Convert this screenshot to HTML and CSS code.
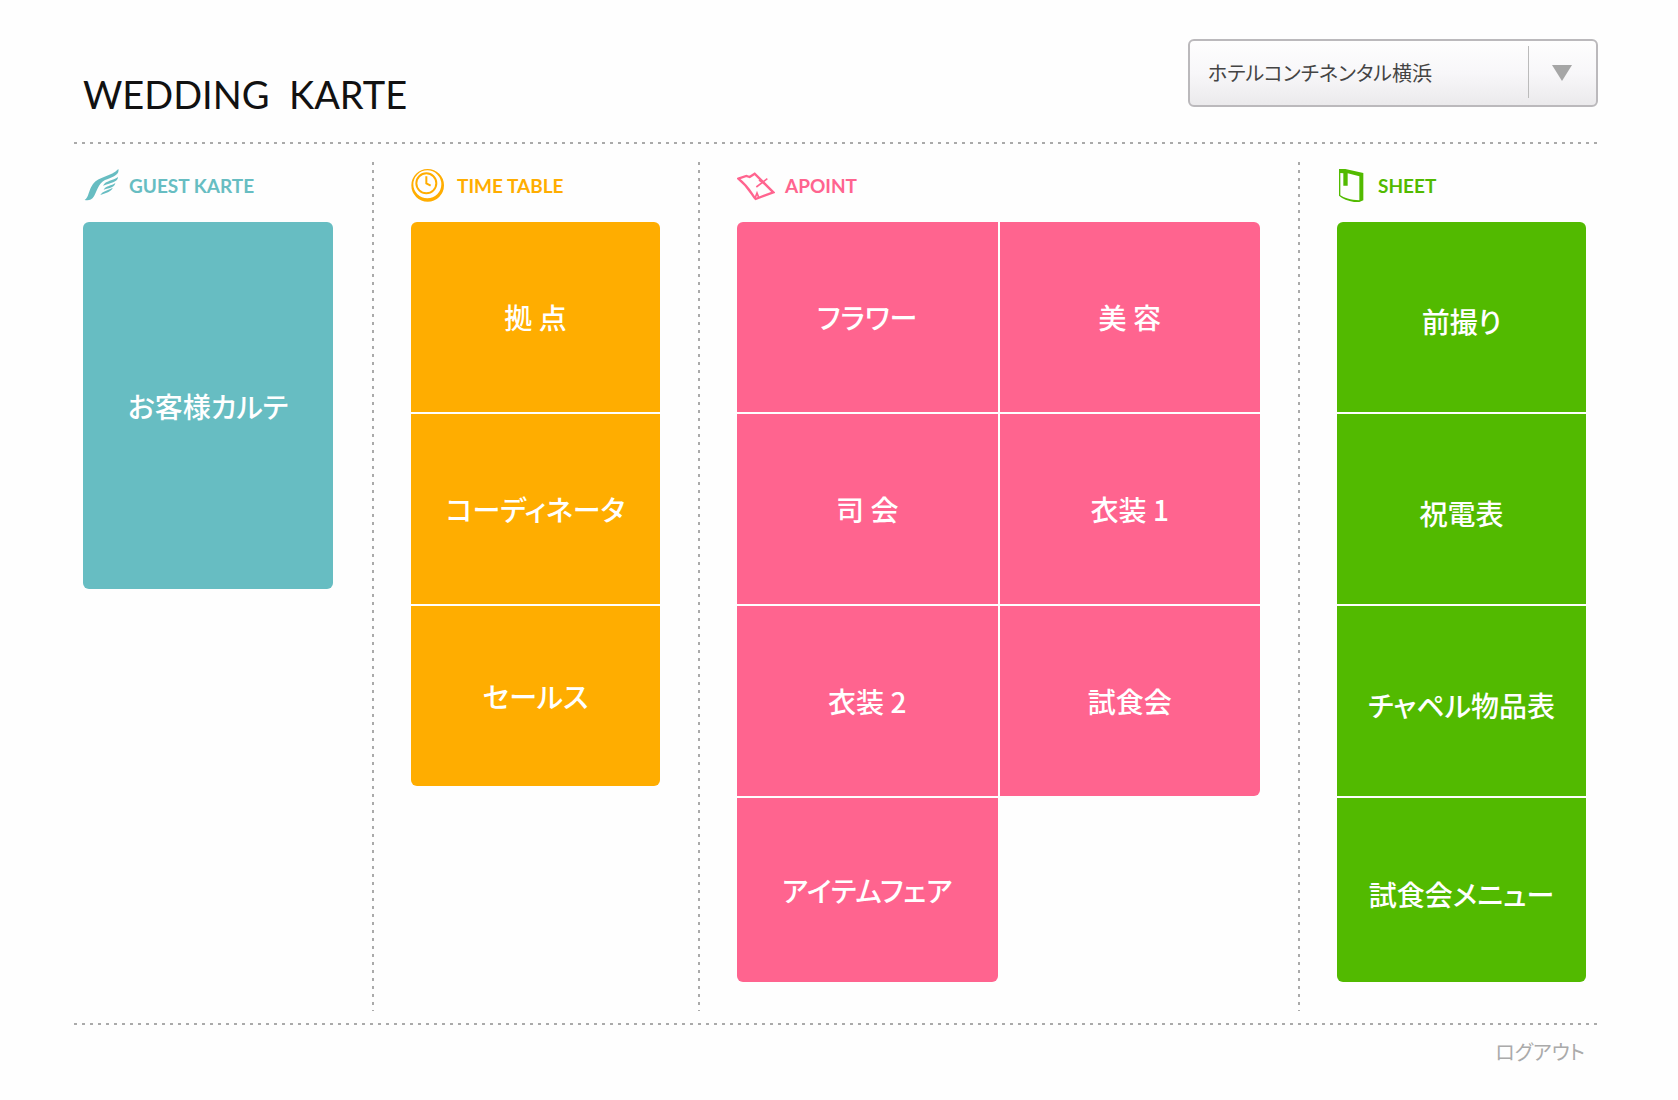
FILE: index.html
```html
<!DOCTYPE html>
<html lang="ja">

<head>
    <meta charset="UTF-8">
    <title>WEDDING KARTE</title>
    <link rel="stylesheet" href="styles.css">
</head>

<body>
    <div class="container">
        <header class="header">
            <h1>WEDDING&nbsp; KARTE</h1>
            <div class="hotel-select">
                <select id="hotel" aria-label="ホテル">
                    <option>ホテルコンチネンタル横浜</option>
                </select>
            </div>
        </header>

        <main class="menu">
            <!-- GUEST KARTE -->
            <section class="menu-col guest">
                <h2>
                    <svg width="36" height="35" viewBox="42 51 108 105" fill="currentColor">
                        <path d="M47 147C60 139 58 118 72 99C88 76 128 77 148 54C153 71 128 79 108 87C88 97 84 120 75 136C67 149 56 149 47 147Z" />
                        <path d="M102 104C110 88 132 90 147 78C147 91 130 95 120 98C112 100 108 102 102 104Z" />
                        <path d="M104 116C111 104 127 105 139 96C138 108 122 111 104 116Z" />
                        <path d="M94 132C101 119 117 119 131 110C129 121 112 125 94 132Z" />
                    </svg>
                    GUEST KARTE
                </h2>
                <div class="tiles">
                    <a href="#">お客様カルテ</a>
                </div>
            </section>

            <!-- TIME TABLE -->
            <section class="menu-col time">
                <h2>
                    <svg width="36" height="35" viewBox="33 51 108 105">
                        <path fill="currentColor" fill-rule="evenodd" d="M34 103a49 49 0 1 0 98 0a49 49 0 1 0-98 0ZM40 100a42 42 0 1 0 84 0a42 42 0 1 0-84 0Z" />
                        <circle cx="79" cy="97" r="30" fill="none" stroke="currentColor" stroke-width="6" />
                        <path d="M79 76V97L92 104" fill="none" stroke="currentColor" stroke-width="6" />
                    </svg>
                    TIME TABLE
                </h2>
                <div class="tiles">
                    <a href="#">拠 点</a>
                    <a href="#">コーディネータ</a>
                    <a href="#">セールス</a>
                </div>
            </section>

            <!-- APOINT -->
            <section class="menu-col apoint">
                <h2>
                    <svg width="38" height="35" viewBox="48 51 114 105" fill="none" stroke="currentColor" stroke-width="7">
                        <path d="M52 83L76 75L86 78L101 68L157 124L104 144C92 132 88 112 52 83Z" />
                        <path d="M102 142L108 126L113 139" stroke-width="5" />
                        <path d="M139 83L106 108M114 87L134 101" stroke-width="5" />
                    </svg>
                    APOINT
                </h2>
                <div class="tiles">
                    <a href="#">フラワー</a>
                    <a href="#">美 容</a>
                    <a href="#">司 会</a>
                    <a href="#">衣装 1</a>
                    <a href="#">衣装 2</a>
                    <a href="#">試食会</a>
                    <a href="#">アイテムフェア</a>
                </div>
            </section>

            <!-- SHEET -->
            <section class="menu-col sheet">
                <h2>
                    <svg width="31" height="35" viewBox="141 51 93 105" fill="currentColor">
                        <path fill-rule="evenodd" d="M147 54H166L220 66V148L208 153H192C174 149 158 144 147 134ZM151 66V133C160 140 182 147 208 148V76L173 67V104H160V67Z" />
                    </svg>
                    SHEET
                </h2>
                <div class="tiles">
                    <a href="#">前撮り</a>
                    <a href="#">祝電表</a>
                    <a href="#">チャペル物品表</a>
                    <a href="#">試食会メニュー</a>
                </div>
            </section>
        </main>

        <footer class="footer">
            <a href="#">ログアウト</a>
        </footer>
    </div>
</body>

</html>
```

FILE: styles.css
```css
* {
    box-sizing: border-box;
}

body {
    margin: 0;
    background: #fefefe;
    font-family: "Noto Sans CJK JP", sans-serif;
    font-feature-settings: "palt";
}

a {
    text-decoration: none;
}

.container {
    padding: 39px 76px 0 74px;
}

/* header */
.header {
    display: flex;
    justify-content: space-between;
    align-items: flex-start;
    height: 105px;
    padding: 0 4px 0 9px;
    background: repeating-linear-gradient(to right, #aaa 0 3px, transparent 3px 8px) bottom / 100% 2px no-repeat;
}

h1 {
    margin: 0;
    padding-top: 33px;
    color: #111;
    font-family: Lato, sans-serif;
    font-size: 38px;
    font-weight: 400;
    line-height: 44px;
}

.hotel-select {
    position: relative;
    width: 410px;
}

.hotel-select select {
    width: 100%;
    height: 68px;
    padding: 0 80px 2px 18px;
    border: 2px solid #bbb9bc;
    border-radius: 6px;
    background: linear-gradient(#fefefe, #f8f7f9 50%, #ebeaec);
    color: #444;
    font: inherit;
    font-size: 20px;
    appearance: none;
}

.hotel-select::before {
    content: "";
    position: absolute;
    top: 7px;
    right: 69px;
    width: 1px;
    height: 52px;
    background: #bbb;
}

.hotel-select::after {
    content: "";
    position: absolute;
    top: 26px;
    right: 26px;
    border: 10px solid transparent;
    border-top: 16px solid #a6a6a6;
    border-bottom: 0;
    pointer-events: none;
}

/* menu */
.menu {
    display: grid;
    grid-template-columns: 300fr 326fr 600fr 302fr;
    padding: 18px 0 12px;
}

.menu-col {
    min-height: 849px;
    padding: 0 40px 0 37px;
    background: repeating-linear-gradient(#aaa 0 3px, transparent 3px 8px) right / 2px 100% no-repeat;
}

.menu-col h2 {
    display: flex;
    align-items: center;
    gap: 10px;
    height: 46px;
    margin: 0 0 14px;
    font-family: Lato, sans-serif;
    font-size: 19px;
    font-weight: 700;
}

.tiles {
    display: grid;
    grid-auto-rows: 190px;
    gap: 2px;
    overflow: hidden;
    border-radius: 6px;
}

.tiles a {
    display: flex;
    justify-content: center;
    align-items: center;
    color: #fff;
    font-size: 28px;
    font-weight: 500;
}

.guest {
    padding-right: 41px;
    padding-left: 9px;
    color: #67bdc2;
}

.guest .tiles {
    grid-auto-rows: 367px;
}

.guest a {
    background: #67bdc2;
}

.time {
    color: #ffad00;
}

.time .tiles {
    grid-template-rows: 190px 190px 180px;
}

.time a {
    background: #ffad00;
}

.apoint {
    color: #ff648f;
}

.apoint .tiles {
    grid-template-columns: 1fr 1fr;
    grid-template-rows: 190px 190px 190px 184px;
}

.apoint a {
    background: #ff648f;
}

.apoint a:nth-child(6),
.apoint a:last-child {
    border-bottom-right-radius: 6px;
}

.sheet {
    padding-right: 16px;
    background: none;
    color: #52ba00;
}

.sheet .tiles {
    grid-template-rows: 190px 190px 190px 184px;
}

.sheet a {
    padding-top: 8px;
    background: #52ba00;
}

/* footer */
.footer {
    padding: 14px 17px 0 0;
    background: repeating-linear-gradient(to right, #aaa 0 3px, transparent 3px 8px) top / 100% 2px no-repeat;
    text-align: right;
}

.footer a {
    color: #aaa;
    font-size: 20px;
}
```
